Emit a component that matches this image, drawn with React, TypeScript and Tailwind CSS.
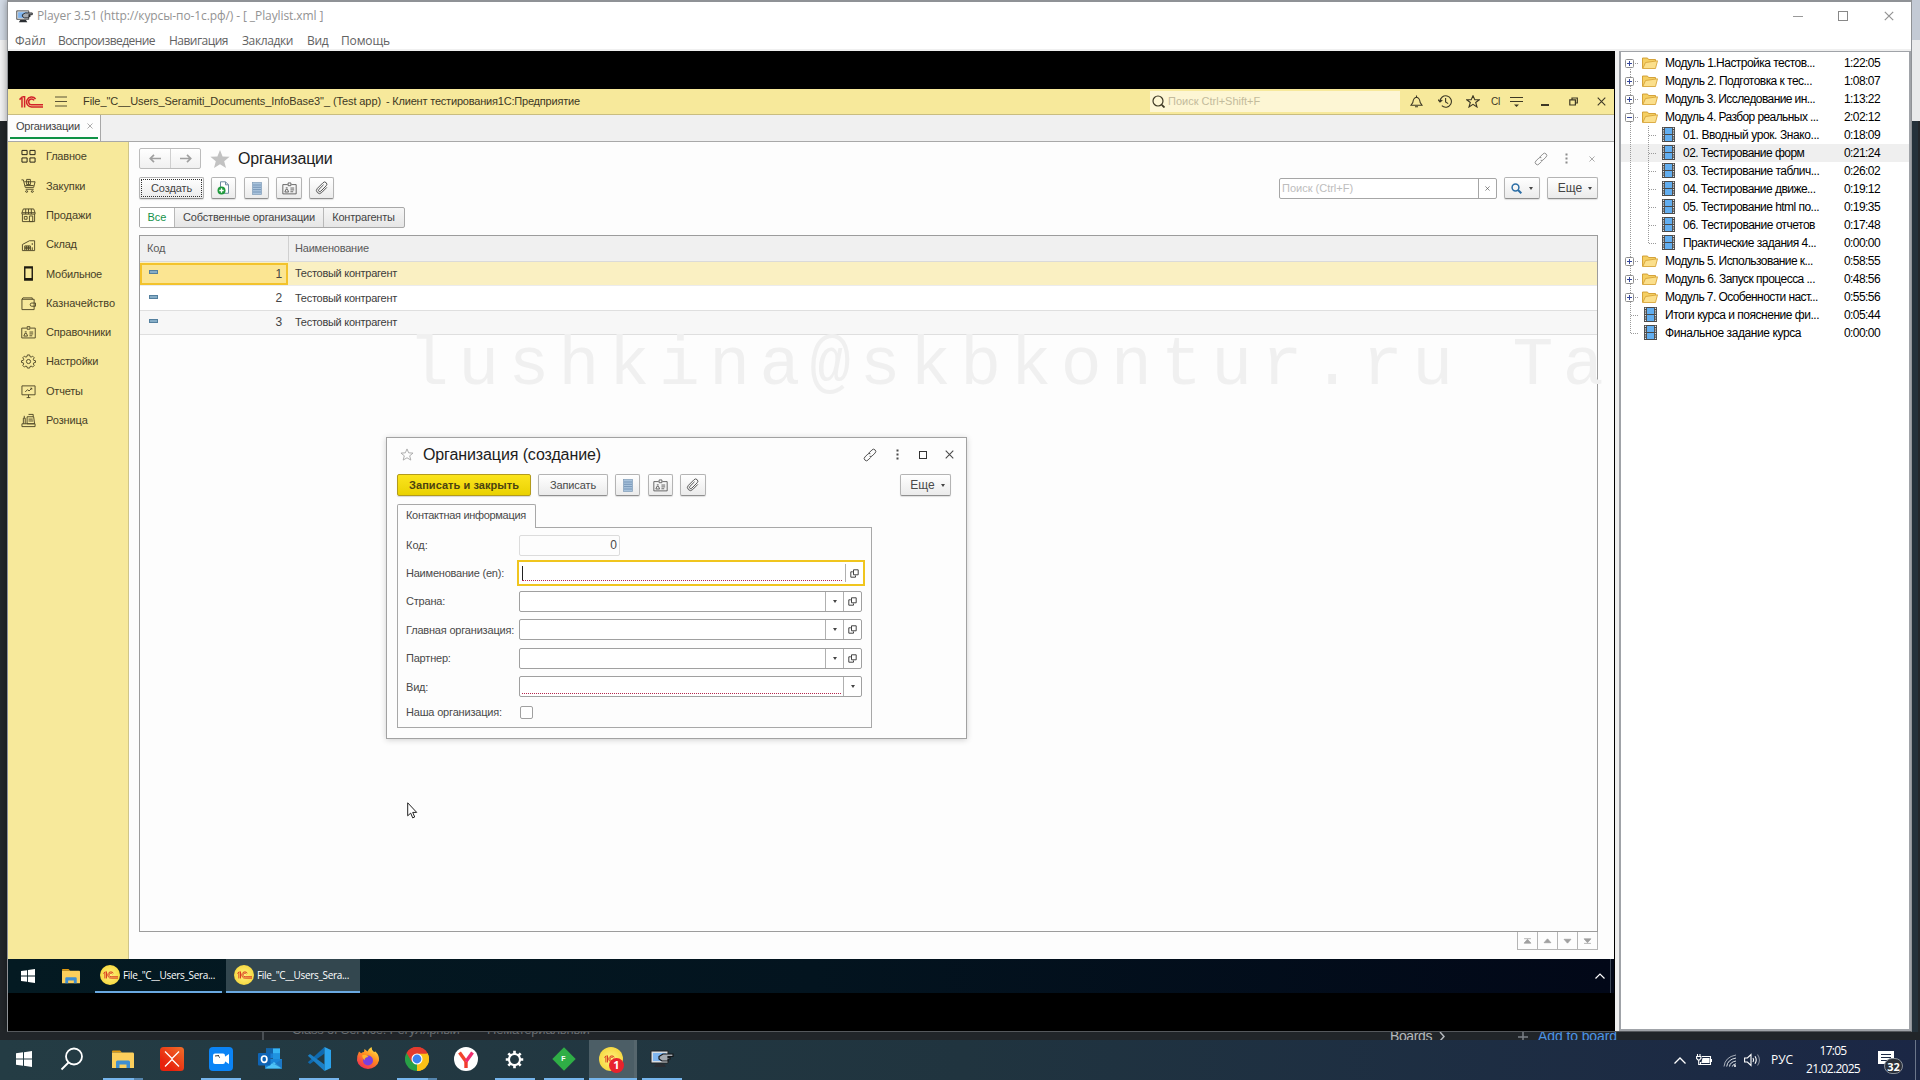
import type { ReactNode } from 'react'
import { clsx } from 'clsx'

/* ---------- shared glyphs ---------- */

function OneC({ className = '' }: { className?: string }) {
  return (
    <svg viewBox="0 0 24 12" className={className} fill="none" stroke="currentColor" strokeWidth="1.5">
      <path d="M0.5 3.6 L3 1.2 V11.5 M5.6 11.5 V0.8 H4" />
      <path d="M16.6 3 A5 5 0 1 0 13 11 H24" />
      <path d="M15 4.4 A2.9 2.9 0 1 0 13 8.8 H24" />
    </svg>
  )
}

function LinkIcon({ className = '' }: { className?: string }) {
  return (
    <svg viewBox="0 0 14 14" className={clsx('h-[14px] w-[14px]', className)} fill="none" stroke="currentColor" strokeWidth="0.9" strokeLinecap="round">
      <g transform="rotate(45 7 7)">
        <path d="M5 6.300H4.800V2a2.200 2.200 0 0 1 4.400 0v4.300a2 2 0 0 1-1.200 1.700" />
        <path d="M9.200 8.500V12a2.200 2.200 0 0 1-4.400 0V7.700A2 2 0 0 1 6 6" />
      </g>
    </svg>
  )
}

function ClipIcon() {
  return (
    <svg viewBox="0 0 14 14" className="h-[14px] w-[14px]" fill="none" stroke="#4f4f4f" strokeWidth="0.9" strokeLinecap="round">
      <path transform="rotate(45 7 7)" d="M10 3.500v7a3 3 0 0 1-6 0V2.500a2.200 2.200 0 0 1 4.400 0v7.700a1.300 1.300 0 0 1-2.600 0V4" />
    </svg>
  )
}

function CardIcon({ className = '' }: { className?: string }) {
  return (
    <svg viewBox="0 0 16 14" className={clsx('h-[13px] w-[15px]', className)} fill="none" stroke="currentColor" strokeWidth="0.9">
      <path d="M6 2.800H.8v10h14.400v-10H10M6.500 1h3v3h-3z" />
      <path d="M3 10.800 4.200 7.800h1.600L7 10.800zM4 6.300h2M9 6.500h4M9 8.500h4M9 10.500h3" />
    </svg>
  )
}

function ListIcon() {
  return (
    <svg viewBox="0 0 10 13" className="h-[13px] w-[10px]">
      <rect x="0.500" y="0.500" width="9" height="12" fill="#a9c3dc" stroke="#7f9cb8" strokeWidth="0.700" />
      <path d="M1 3h8M1 5.300h8M1 7.600h8M1 10h8" stroke="#6a8cae" strokeWidth="0.800" />
    </svg>
  )
}

function NewDocIcon() {
  return (
    <svg viewBox="0 0 13 14" className="h-[14px] w-[13px]">
      <path d="M3.500.800h5l3 3v8.500h-8z" fill="#fff" stroke="#6c8aa0" strokeWidth="1" />
      <path d="M8.500.800v3h3" fill="none" stroke="#6c8aa0" strokeWidth="1" />
      <circle cx="4.500" cy="9.500" r="4" fill="#1e9a3c" />
      <path d="M4.500 7.300v4.400M2.300 9.500h4.400" stroke="#fff" strokeWidth="1.300" />
    </svg>
  )
}

function CrossIcon({ className = '' }: { className?: string }) {
  return (
    <svg viewBox="0 0 10 10" className={className} fill="none" stroke="currentColor" strokeWidth="1.200">
      <path d="M.8.800l8.400 8.400M9.200.800.800 9.200" />
    </svg>
  )
}

function Dots({ className = '' }: { className?: string }) {
  return (
    <svg viewBox="0 0 3 11" className={clsx('h-[11px] w-[3px]', className)} fill="currentColor">
      <rect x=".5" y="0.500" width="2" height="2" />
      <rect x=".5" y="4.500" width="2" height="2" />
      <rect x=".5" y="8.500" width="2" height="2" />
    </svg>
  )
}

function Caret() {
  return <span className="h-0 w-0 border-x-[2.5px] border-t-[3px] border-x-transparent border-t-[#444]" />
}

function OpenIcon() {
  return (
    <svg viewBox="0 0 9 9" className="h-[9px] w-[9px]" fill="none" stroke="#444" strokeWidth="1">
      <path d="M3.500.800h4.700v5H3.500zM2.800 2.800H.800v5.400h4.700V6.500" />
    </svg>
  )
}

function MonitorHand({ className = '' }: { className?: string }) {
  return (
    <svg viewBox="0 0 24 18" className={className}>
      <path d="M1 1h17v12H1z" fill="#d8dde2" stroke="#222" strokeWidth="1" />
      <path d="M3 3h13v8H3z" fill="#7fb4ee" />
      <path d="M6 14h8l2 3H4z" fill="#2a2d32" />
      <path d="M9 6.500 13 4h10v2.500h-5v1h2v1.500h-2V11h-6L9 9z" fill="#a4a9af" stroke="#15181b" strokeWidth="1.200" />
    </svg>
  )
}

function Folder({ className = '' }: { className?: string }) {
  return (
    <svg viewBox="0 0 22 18" className={className}>
      <path d="M0 1.500Q0 .500 1 .500h7l2 2H0z" fill="#e09a10" />
      <path d="M0 2.500h21Q22 2.500 22 4v14H0z" fill="#fccf5c" />
      <path d="M4 18v-6q0-1.500 1.500-1.500h11Q18 10.500 18 12v6h-3.500v-3.500h-7V18z" fill="#3f8fd2" />
    </svg>
  )
}

function WinLogo({ className = '' }: { className?: string }) {
  return (
    <svg viewBox="0 0 16 16" className={className} fill="#fff">
      <path d="M0 2.300 7 1.300v6.200H0zM8 1.150 16 0v7.500H8zM0 8.500h7v6.200L0 13.700zM8 8.500h8V16L8 14.850z" />
    </svg>
  )
}

/* ---------- sidebar ---------- */

const side = 'h-[15px] w-[15px]'
const sections: { label: string; track: string; icon: ReactNode }[] = [
  {
    label: 'Главное', track: 'tracking-[-0.2px]',
    icon: <path d="M1 1.500h5.500v4.500H1zM9.500 1.500H15v4.500H9.500zM1 9.500h5.500V14H1zM9.500 9.500H15V14H9.500z" />,
  },
  {
    label: 'Закупки', track: 'tracking-[-0.1px]',
    icon: <path d="M.5 2h2l2 8h9l1.500-6H3.500M5 12h8.500M6 1.500h4V7H6zM8 3v4M4.500 8h9M6 13.500a1 1 0 1 0 .1 0M12 13.500a1 1 0 1 0 .1 0" />,
  },
  {
    label: 'Продажи', track: 'tracking-[-0.1px]',
    icon: <path d="M2.500 1h11l1.500 4v1.500H1V5zM1.500 6.500v8h13v-8M1 5h14M5 1v5.500M8 1v5.500M11 1v5.500M3.500 9h3v3h-3zM9 8.500h3.500v6H9z" />,
  },
  {
    label: 'Склад', track: 'tracking-[-0.2px]',
    icon: <path d="M1.500 14.500V8L9 4h5.500v10.500zM4 14V9.500h6V14M4 11h6M4 12.500h6M6 9.500V14M8 9.500V14M12 6.500v2M12 11v3" />,
  },
  {
    label: 'Мобильное', track: 'tracking-[-0.26px]',
    icon: <path d="M4 1h8v14H4zM4 2h8M4 13.500h8" strokeWidth="1.500" />,
  },
  {
    label: 'Казначейство', track: 'tracking-[-0.06px]',
    icon: <path d="M1 3.500h13v11H1zM1 3.500l1-1.500h10v1.500M15.500 7.500h-4a1.700 1.700 0 0 0 0 3.400h4z" />,
  },
  {
    label: 'Справочники', track: 'tracking-[-0.15px]',
    icon: <path d="M6 3.300H.8v10.500h14.400V3.300H10M6.500 1.800h3V4.500h-3zM3 11.800l1.200-3h1.600L7 11.800zM4 7.300h2M9 7.500h4M9 9.500h4M9 11.500h3" />,
  },
  {
    label: 'Настройки', track: 'tracking-[-0.2px]',
    icon: (
      <>
        <path d="M6.800 1h2.400l.4 1.800 1.200.5 1.600-1 1.700 1.700-1 1.600.5 1.200 1.900.400v1.800l-1.900.400-.5 1.200 1 1.600-1.700 1.700-1.600-1-1.200.5L9.200 15H6.800l-.4-1.600-1.200-.5-1.600 1-1.700-1.700 1-1.600-.5-1.200L.5 9V7.200l1.900-.400.5-1.200-1-1.600L3.600 2.300l1.600 1 1.200-.5z" />
        <circle cx="8" cy="8" r="2.200" />
      </>
    ),
  },
  {
    label: 'Отчеты', track: 'tracking-[-0.2px]',
    icon: <path d="M1 2h14v9.500H1zM6 14.500h4M8 11.500v3M4.500 8.500 7 6l1.500 1.500 3-3M10 4.500h1.500V6" />,
  },
  {
    label: 'Розница', track: 'tracking-[-0.1px]',
    icon: <path d="M1 14.500h14v-3H1zM2.500 11.500v-6h2v6M6.500 4h7l1 7.500h-8zM8 1.500h5V4M8 6.500h4.500M8 8.500h5M3.500 3v2.500" />,
  },
]

function Sidebar() {
  return (
    <nav className="flex w-[121px] shrink-0 flex-col border-r border-[#cfc58a] bg-[#f7e99b] text-[11px] text-[#473f28]">
      {sections.map((s) => (
        <div key={s.label} className="flex h-[29.3px] items-center pl-[12.5px]">
          <svg
            viewBox="0 0 16 16" fill="none" strokeWidth="1"
            className={clsx(side, s.label === 'Мобильное' || s.label === 'Главное' ? 'stroke-[#1d1a10]' : 'stroke-[#4f4728]')}
          >
            {s.icon}
          </svg>
          <span className={clsx('ml-[10.5px]', s.track)}>{s.label}</span>
        </div>
      ))}
    </nav>
  )
}

/* ---------- 1C client ---------- */

const btn = 'flex items-center justify-center rounded-[2px] border border-[#b4b4b4] border-b-[#8f8f8f] bg-linear-to-b from-white to-[#ebebeb] shadow-[0_1px_1px_rgba(0,0,0,0.12)]'

function AppHeader() {
  return (
    <header className="flex h-[26px] shrink-0 items-center border-b border-[#c9bd80] bg-[#f7e99b] text-[11px] text-[#3d3824]">
      <OneC className="ml-[11px] h-[12px] w-[24px] text-[#d2232a]" />
      <svg viewBox="0 0 12 11" className="ml-[12px] h-[11px] w-[12px]" stroke="#5b5436" strokeWidth="1.200">
        <path d="M0 1h12M0 5.500h12M0 10h12" />
      </svg>
      <span className="ml-[16px] w-[303px] whitespace-pre tracking-[-0.08px]">File_"C__Users_Seramiti_Documents_InfoBase3"_ (Test app)</span>
      <span className="whitespace-pre tracking-[-0.2px]">- Клиент тестирования1С:Предприятие</span>
      <div className="ml-auto flex h-[21px] w-[250px] items-center bg-[#fdf6d4] pl-[2px]">
        <svg viewBox="0 0 13 13" className="h-[13px] w-[13px]" fill="none" stroke="#3d3824" strokeWidth="1.200">
          <circle cx="6" cy="6" r="5" />
          <path d="m9.800 9.800 2.700 2.700" strokeWidth="1.800" />
        </svg>
        <span className="ml-[3px] text-[#c3bb9c]">Поиск Ctrl+Shift+F</span>
      </div>
      <div className="flex w-[214px] shrink-0 items-center text-[#3d3824]">
        <svg viewBox="0 0 13 13" className="ml-[10px] h-[13px] w-[13px]" fill="none" stroke="currentColor" strokeWidth="1.100">
          <path d="M1 10.200h11L10.200 7.500C9.800 4.500 9 2.500 6.500 2.200 4 2.500 3.200 4.500 2.800 7.500zM6.500.500v1.700M5 11.800h3" />
        </svg>
        <svg viewBox="0 0 14 13" className="ml-[15px] h-[13px] w-[14px]" fill="none" stroke="currentColor" strokeWidth="1.100">
          <path d="M2 6.500a5.700 5.700 0 1 1 1.800 4.200M0 4.500l2 2.500 2.300-2M7.600 3v4l2.600 1.600" />
        </svg>
        <svg viewBox="0 0 14 13" className="ml-[14px] h-[13px] w-[14px]" fill="none" stroke="currentColor" strokeWidth="1.100">
          <path d="m7 .8 1.800 4h4.400L9.700 7.500l1.300 4.500L7 9.400 3 12l1.300-4.500L.8 4.800h4.400z" />
        </svg>
        <span className="ml-[11px] text-[10px] tracking-[-0.4px]">CI</span>
        <svg viewBox="0 0 13 12" className="ml-[10px] h-[12px] w-[13px]" fill="none" stroke="currentColor" strokeWidth="1.100">
          <path d="M0 1.500h13M0 5.500h13" />
          <path d="M4 8.500h5L6.500 11z" fill="currentColor" stroke="none" />
        </svg>
        <span className="mt-[7px] ml-[18px] h-[1.5px] w-[8px] bg-[#3d3824]" />
        <svg viewBox="0 0 9 9" className="ml-[20px] h-[9px] w-[9px]" fill="none" stroke="currentColor" strokeWidth="1.200">
          <path d="M3 2.600V1h5.300v5H6.500M.8 2.800h5.600V8H.8z" />
        </svg>
        <CrossIcon className="ml-[19px] h-[9px] w-[9px]" />
      </div>
    </header>
  )
}

function Arrow({ flip }: { flip?: boolean }) {
  return (
    <svg viewBox="0 0 12 9" className={clsx('h-[9px] w-[12px]', flip && 'rotate-180')} fill="none" stroke="#a0a0a0" strokeWidth="1.700">
      <path d="M1 4.500h11M5 .8 1.300 4.500 5 8.200" />
    </svg>
  )
}

const rows = [
  { id: 1, name: 'Тестовый контрагент' },
  { id: 2, name: 'Тестовый контрагент' },
  { id: 3, name: 'Тестовый контрагент' },
]

function DataTable() {
  return (
    <div className="mt-[7px] flex h-[697px] shrink-0 flex-col border border-[#9c9c9c] bg-[#fdfdfd] tracking-[-0.2px]">
      <div className="flex h-[26px] shrink-0 items-center border-b border-[#dadada] bg-[#f0f0f0] text-[#5a5a5a]">
        <span className="flex h-full w-[149px] items-center border-r border-[#d0d0d0] pl-[7px]">Код</span>
        <span className="pl-[6px]">Наименование</span>
      </div>
      {rows.map((r) => (
        <div
          key={r.id}
          className={clsx(
            'flex h-[24.4px] shrink-0 items-center border-b',
            r.id === 1 && 'border-[#ececec] bg-[#faf0c2]',
            r.id === 2 && 'border-[#dfdfdf] bg-white',
            r.id === 3 && 'border-[#dfdfdf] bg-[#f7f7f7]',
          )}
        >
          <span
            className={clsx(
              'flex w-[148px] items-center justify-between border-2 pr-[4px] pl-[7px]',
              r.id === 1 ? 'h-[22px] border-[#f3c32c] bg-[#fbe592]' : 'h-full border-transparent',
            )}
          >
            <span className="mt-[-3px] h-[4px] w-[9px] border border-[#54809f] bg-[#86adc6]" />
            <span className="text-[12px] text-[#454545]">{r.id}</span>
          </span>
          <span className="pl-[7px] tracking-[-0.27px] text-[#3c3c3c]">{r.name}</span>
        </div>
      ))}
      <div className="relative h-[80px]">
        <span className="absolute top-[-9px] left-[268px] w-[1206px] overflow-hidden font-['Liberation_Mono'] text-[68px] leading-[80px] tracking-[9.4px] whitespace-pre text-[#f0f0f0]">
          lushkina@skbkontur.ru Ta
        </span>
      </div>
    </div>
  )
}

function ScrollButtons() {
  const shapes = ['M1 .8h8M5 1.500 9 6H1z', 'M5 1 9 5.500H1z', 'M1 1.500h8L5 6z', 'M1 1h8L5 5.500zM1 6.300h8']
  return (
    <div className="flex h-[18px] self-end border-r border-b border-[#b5b5b5]">
      {shapes.map((d) => (
        <span key={d} className="flex w-[20px] items-center justify-center border-l border-[#b5b5b5]">
          <svg viewBox="0 0 10 7" className="h-[6px] w-[9px]" fill="#a0a0a0" stroke="#a0a0a0" strokeWidth="0.900">
            <path d={d} />
          </svg>
        </span>
      ))}
    </div>
  )
}

function ListForm() {
  return (
    <section className="flex min-w-0 flex-1 flex-col bg-[#fdfdfd] pr-[16px] pl-[10px] text-[11px] text-[#444]">
      <div className="mt-[6px] flex h-[21px] items-center">
        <div className="flex h-[21px] w-[62px] rounded-[2px] border border-[#bcbcbc] bg-linear-to-b from-white to-[#f0f0f0]">
          <span className="flex w-[31px] items-center justify-center border-r border-[#cfcfcf]"><Arrow /></span>
          <span className="flex flex-1 items-center justify-center"><Arrow flip /></span>
        </div>
        <svg viewBox="0 0 20 18" className="ml-[9px] h-[18px] w-[20px]" fill="#c2c2c2">
          <path d="m10 0 2.600 6.400 7 .4-5.400 4.400 1.800 6.800L10 14.200 4 18l1.800-6.800L.4 6.800l7-.4z" />
        </svg>
        <h1 className="ml-[8px] text-[16px] tracking-[-0.2px] text-[#1c1c1c]">Организации</h1>
        <LinkIcon className="ml-auto text-[#8a8a8a]" />
        <Dots className="ml-[17px] text-[#8c8c8c]" />
        <CrossIcon className="mr-[3px] ml-[21px] h-[6px] w-[6px] text-[#8c8c8c]" />
      </div>
      <div className="mt-[8px] flex h-[22px]">
        <div className={clsx(btn, 'w-[65px] p-[1px]')}>
          <span className="flex h-full w-full items-center justify-center border border-dotted border-[#333] tracking-[-0.1px]">Создать</span>
        </div>
        <div className={clsx(btn, 'ml-[7px] w-[25px]')}><NewDocIcon /></div>
        <div className={clsx(btn, 'ml-[8px] w-[25px]')}><ListIcon /></div>
        <div className={clsx(btn, 'ml-[7px] w-[26px] text-[#4f4f4f]')}><CardIcon /></div>
        <div className={clsx(btn, 'ml-[7px] w-[25px]')}><ClipIcon /></div>
        <div className="my-[0.5px] ml-auto flex w-[218px] rounded-[2px] border border-[#a6a6a6] bg-white">
          <span className="flex flex-1 items-center pl-[2px] text-[#bdbdbd]">Поиск (Ctrl+F)</span>
          <span className="flex w-[18px] items-center justify-center border-l border-[#a6a6a6]"><CrossIcon className="h-[5px] w-[5px] text-[#444]" /></span>
        </div>
        <div className={clsx(btn, 'ml-[7px] w-[36px] gap-[7px]')}>
          <svg viewBox="0 0 11 11" className="h-[11px] w-[11px]" fill="none" stroke="#2c6ea6">
            <circle cx="4.500" cy="4.500" r="3.400" strokeWidth="1.500" />
            <path d="m7 7 3.300 3.300" strokeWidth="2" />
          </svg>
          <Caret />
        </div>
        <div className={clsx(btn, 'ml-[7px] w-[51px] gap-[6px] pl-[5px] text-[12px]')}>Еще<Caret /></div>
      </div>
      <div className="mt-[8px] flex h-[21px] shrink-0 self-start rounded-[2px] border border-[#a8a8a8] bg-linear-to-b from-[#f6f6f6] to-[#e6e6e6] leading-[19px]">
        <span className="w-[34px] bg-white text-center text-[#15924a]">Все</span>
        <span className="w-[149px] border-l border-[#b8b8b8] text-center tracking-[-0.17px]">Собственные организации</span>
        <span className="w-[81px] border-l border-[#b8b8b8] pr-[1px] text-center tracking-[-0.2px]">Контрагенты</span>
      </div>
      <DataTable />
      <ScrollButtons />
    </section>
  )
}

/* ---------- dialog ---------- */

function Field({ label, track, buttons, required }: {
  label: string; track: string; buttons: ('list' | 'open')[]; required?: boolean
}) {
  return (
    <div className="flex h-[28.5px] items-center">
      <span className={clsx('w-[113px] shrink-0 whitespace-nowrap', track)}>{label}</span>
      <div className="flex h-[21px] w-[343px] rounded-[2px] border border-[#a0a0a0] bg-white">
        <span className="flex flex-1 items-end px-[2px] pb-[2px]">
          {required && <span className="w-full border-b border-dotted border-[#b5274d]" />}
        </span>
        {buttons.map((b) => (
          <span key={b} className="flex w-[18px] items-center justify-center border-l border-[#b0b0b0]">
            {b === 'list' ? <Caret /> : <OpenIcon />}
          </span>
        ))}
      </div>
    </div>
  )
}

function CreateDialog() {
  return (
    <div className="absolute top-[437px] left-[386px] flex h-[302px] w-[581px] flex-col border border-[#a2a2a2] bg-[#fdfdfd] px-[10px] font-['Liberation_Sans'] text-[11px] text-[#4a4a4a] shadow-[0_1px_6px_rgba(0,0,0,0.18)]">
      <div className="mt-[6px] flex h-[21px] items-center text-[#4a4a4a]">
        <svg viewBox="0 0 15 14" className="ml-[3px] h-[13px] w-[14px]" fill="none" stroke="#a8a8a8" strokeWidth="1">
          <path d="m7.500 1 1.800 4.200 4.700.3-3.600 2.900 1.200 4.600-4.100-2.500L3.400 13l1.200-4.600L1 5.500l4.700-.3z" />
        </svg>
        <h2 className="ml-[9px] text-[16px] tracking-[-0.11px] text-[#1c1c1c]">Организация (создание)</h2>
        <LinkIcon className="ml-auto" />
        <Dots className="ml-[19px]" />
        <span className="ml-[20px] h-[8px] w-[8px] border border-[#333]" />
        <CrossIcon className="mr-[2px] ml-[18px] h-[9px] w-[9px]" />
      </div>
      <div className="mt-[9px] flex h-[22px] shrink-0">
        <div className="flex w-[134px] items-center justify-center rounded-[2px] border border-[#b39b1c] bg-linear-to-b from-[#fbe41c] to-[#ead200] font-bold tracking-[0.05px] text-[#4c4310] shadow-[0_1px_1px_rgba(0,0,0,0.15)]">
          Записать и закрыть
        </div>
        <div className={clsx(btn, 'ml-[7px] w-[70px] tracking-[-0.13px]')}>Записать</div>
        <div className={clsx(btn, 'ml-[7px] w-[25px]')}><ListIcon /></div>
        <div className={clsx(btn, 'ml-[8px] w-[25px] text-[#4f4f4f]')}><CardIcon /></div>
        <div className={clsx(btn, 'ml-[7px] w-[26px]')}><ClipIcon /></div>
        <div className={clsx(btn, 'mr-[5px] ml-auto w-[51px] gap-[6px] pl-[4px] text-[12px]')}>Еще<Caret /></div>
      </div>
      <div className="z-10 mt-[8px] flex h-[24px] w-[139px] shrink-0 items-center rounded-t-[2px] border border-b-0 border-[#a8a8a8] bg-[#fdfdfd] pb-[2px] pl-[8px] tracking-[-0.31px] whitespace-nowrap">
        Контактная информация
      </div>
      <div className="mt-[-1px] flex h-[201px] w-[475px] shrink-0 flex-col border border-[#a8a8a8] pt-[3px] pl-[8px]">
        <div className="flex h-[28px] items-center">
          <span className="w-[113px]">Код:</span>
          <span className="flex h-[21px] w-[101px] items-center justify-end rounded-[2px] border border-[#dcdcdc] pr-[2px] text-[12px]">0</span>
        </div>
        <div className="flex h-[28px] items-center">
          <span className="w-[111px] shrink-0 tracking-[-0.22px] whitespace-nowrap">Наименование (en):</span>
          <div className="flex h-[26px] w-[348px] border-2 border-[#f0c51e] bg-white py-[2px]">
            <span className="flex flex-1 flex-col px-[3px]">
              <span className="mt-[2px] h-[14px] w-px bg-[#222]" />
              <span className="border-b border-dotted border-[#b5274d]" />
            </span>
            <span className="flex w-[18px] items-center justify-center border-l border-[#b0b0b0]"><OpenIcon /></span>
          </div>
        </div>
        <Field label="Страна:" track="tracking-[-0.2px]" buttons={['list', 'open']} />
        <Field label="Главная организация:" track="tracking-[-0.19px]" buttons={['list', 'open']} />
        <Field label="Партнер:" track="tracking-[-0.2px]" buttons={['list', 'open']} />
        <Field label="Вид:" track="tracking-[-0.2px]" buttons={['list']} required />
        <div className="flex h-[23px] items-center">
          <span className="w-[114px] tracking-[-0.18px]">Наша организация:</span>
          <span className="h-[13px] w-[13px] rounded-[2px] border border-[#a0a0a0] bg-white" />
        </div>
      </div>
    </div>
  )
}

/* ---------- recorded desktop taskbar ---------- */

function CoinIcon({ className = '' }: { className?: string }) {
  return (
    <span className={clsx('flex items-center justify-center rounded-full bg-radial from-[#fff27a] to-[#f3cf1a] text-[#d8321e]', className)}>
      <OneC className="h-[8px] w-[15px]" />
    </span>
  )
}

function VideoTaskbar() {
  return (
    <div className="flex h-[34px] shrink-0 items-center bg-linear-to-r from-[#041a22] via-[#03141f] to-[#020818] font-['Open_Sans'] text-[10px] text-white">
      <WinLogo className="ml-[13px] h-[14px] w-[14px]" />
      <Folder className="ml-[27px] h-[16px] w-[18px]" />
      <div className="ml-[15px] flex h-full w-[127px] items-center border-b-2 border-[#6aa9e2] pl-[5px]">
        <CoinIcon className="h-[20px] w-[20px]" />
        <span className="ml-[3px] tracking-[-0.31px]">File_"C__Users_Sera...</span>
      </div>
      <div className="ml-[4px] flex h-full w-[134px] items-center border-b-2 border-[#6aa9e2] bg-[#33474f] pl-[8px]">
        <CoinIcon className="h-[20px] w-[20px]" />
        <span className="ml-[3px] tracking-[-0.31px]">File_"C__Users_Sera...</span>
      </div>
      <svg viewBox="0 0 10 6" className="mr-[5px] ml-auto h-[6px] w-[10px]" fill="none" stroke="#fff" strokeWidth="1.200">
        <path d="M.5 5.500 5 1l4.500 4.500" />
      </svg>
      <span className="mr-[3px] h-full w-px bg-[#3c4656]" />
    </div>
  )
}

function VideoArea() {
  return (
    <div className="flex w-[1607px] shrink-0 flex-col border-r border-black bg-black pt-[38px] font-['Liberation_Sans']">
      <AppHeader />
      <div className="flex h-[27px] shrink-0 border-b border-[#a8a8a8] bg-[#f0f0f0]">
        <div className="flex w-[93px] flex-col border-r border-[#a8a8a8] bg-[#fdfdfd] px-[2px] pb-[2px]">
          <div className="flex flex-1 items-center pl-[6px] text-[11px] text-[#444]">
            <span className="tracking-[-0.25px]">Организации</span>
            <CrossIcon className="ml-[7px] h-[6px] w-[6px] text-[#8c8c8c]" />
          </div>
          <span className="h-[2px] bg-[#0f9246]" />
        </div>
      </div>
      <div className="flex h-[817px] shrink-0">
        <Sidebar />
        <ListForm />
      </div>
      <VideoTaskbar />
    </div>
  )
}

/* ---------- playlist tree ---------- */

type Node = { kind: 'closed' | 'open' | 'film' | 'leaf'; label: string; time: string; track: string; active?: boolean }
const playlist: Node[] = [
  { kind: 'closed', label: 'Модуль 1.Настройка тестов...', time: '1:22:05', track: 'tracking-[-0.53px]' },
  { kind: 'closed', label: 'Модуль 2. Подготовка к тес...', time: '1:08:07', track: 'tracking-[-0.53px]' },
  { kind: 'closed', label: 'Модуль 3. Исследование ин...', time: '1:13:22', track: 'tracking-[-0.59px]' },
  { kind: 'open', label: 'Модуль 4. Разбор реальных ...', time: '2:02:12', track: 'tracking-[-0.58px]' },
  { kind: 'film', label: '01. Вводный урок. Знако...', time: '0:18:09', track: 'tracking-[-0.40px]' },
  { kind: 'film', label: '02. Тестирование форм', time: '0:21:24', track: 'tracking-[-0.54px]', active: true },
  { kind: 'film', label: '03. Тестирование таблич...', time: '0:26:02', track: 'tracking-[-0.51px]' },
  { kind: 'film', label: '04. Тестирование движе...', time: '0:19:12', track: 'tracking-[-0.54px]' },
  { kind: 'film', label: '05. Тестирование html по...', time: '0:19:35', track: 'tracking-[-0.53px]' },
  { kind: 'film', label: '06. Тестирование отчетов', time: '0:17:48', track: 'tracking-[-0.50px]' },
  { kind: 'film', label: 'Практические задания 4...', time: '0:00:00', track: 'tracking-[-0.52px]' },
  { kind: 'closed', label: 'Модуль 5. Использование к...', time: '0:58:55', track: 'tracking-[-0.56px]' },
  { kind: 'closed', label: 'Модуль 6. Запуск процесса ...', time: '0:48:56', track: 'tracking-[-0.53px]' },
  { kind: 'closed', label: 'Модуль 7. Особенности наст...', time: '0:55:56', track: 'tracking-[-0.58px]' },
  { kind: 'leaf', label: 'Итоги курса и пояснение фи...', time: '0:05:44', track: 'tracking-[-0.48px]' },
  { kind: 'leaf', label: 'Финальное задание курса', time: '0:00:00', track: 'tracking-[-0.41px]' },
]

function FilmIcon() {
  return (
    <svg viewBox="0 0 13 15" className="h-[15px] w-[13px] shrink-0">
      <path d="M0 0h13v15H0z" fill="#4a4a4a" />
      <path d="M3 1h7v6H3zM3 8h7v6H3z" fill="#62aef0" />
      <path d="M1.500.800v14M11.500.800v14" stroke="#e4e4e4" strokeWidth="1.200" strokeDasharray="1.200 1.200" />
    </svg>
  )
}

function TreeFolder() {
  return (
    <svg viewBox="0 0 16 12" className="h-[12px] w-[16px] shrink-0">
      <path d="M.5 11.500V1h5l1 1.500h7V5" fill="#f5cf62" stroke="#cf9a2c" strokeWidth="0.900" />
      <path d="M.8 11.500 3.500 5.500 15.500 3.800 13.500 11.500z" fill="#fbdf8b" stroke="#d8a53a" strokeWidth="0.900" />
    </svg>
  )
}

function TreeRow({ node, last }: { node: Node; last: boolean }) {
  const isModule = node.kind === 'closed' || node.kind === 'open'
  const lastFilm = node.label.startsWith('Практические')
  return (
    <div className={clsx('flex h-[18px] shrink-0 items-center', node.active && 'bg-[#efefef]')}>
      <svg viewBox="0 0 40 18" className={clsx('h-[18px] shrink-0', node.kind === 'film' ? 'w-[40px]' : 'w-[20px]')} preserveAspectRatio="xMinYMin slice" fill="none">
        <g stroke="#9a9a9a" strokeDasharray="1 1">
          <path d={last ? 'M9.500 0v9' : node.time === '1:22:05' ? 'M9.500 9v9' : 'M9.500 0v18'} />
          {node.kind !== 'film' && <path d="M10 9.500h8" />}
          {node.kind === 'film' && <path d={lastFilm ? 'M27.500 0v9M28 9.500h8' : 'M27.500 0v18M28 9.500h8'} />}
        </g>
        {isModule && (
          <>
            <rect x="4.500" y="5.500" width="8" height="8" rx="1" fill="#fff" stroke="#8e8e8e" />
            <path d={node.kind === 'closed' ? 'M6 9.500h5M8.500 7v5' : 'M6 9.500h5'} stroke="#35479c" />
          </>
        )}
      </svg>
      <span className={clsx('flex items-center', node.kind === 'film' ? 'w-[22px] pb-[1px] pl-[1px]' : node.kind === 'leaf' ? 'w-[24px] pb-[1px] pl-[3px]' : 'w-[24px] pb-[1px] pl-[1px]')}>
        {isModule ? <TreeFolder /> : <FilmIcon />}
      </span>
      <span className={clsx('whitespace-nowrap', node.track)}>{node.label}</span>
      <span className="mr-[28px] ml-auto w-[37px] tracking-[-0.58px]">{node.time}</span>
    </div>
  )
}

function Playlist() {
  return (
    <div className="ml-[4px] flex flex-1 flex-col border-2 border-t border-[#a0a3a8] bg-white pt-[2px] font-['Liberation_Sans'] text-[12px] text-black">
      {playlist.map((n, i) => (
        <TreeRow key={n.label} node={n} last={i === playlist.length - 1} />
      ))}
    </div>
  )
}

/* ---------- player window ---------- */

function PlayerWindow() {
  return (
    <div className="flex w-[1905px] shrink-0 flex-col border border-t-2 border-[#8f9296] border-b-[#55585c] bg-white font-['Open_Sans'] text-[12px] shadow-[0_0_8px_rgba(0,0,0,0.4)]">
      <div className="flex h-[29px] shrink-0 items-center pb-[1px] text-[#939393]">
        <MonitorHand className="ml-[8px] h-[13px] w-[17px]" />
        <span className="ml-[4px] tracking-[-0.1px]">Player 3.51 (http://курсы-по-1с.рф/) - [ _Playlist.xml ]</span>
        <span className="mr-[35px] ml-auto h-px w-[10px] bg-[#999]" />
        <span className="mr-[36px] h-[10px] w-[10px] border border-[#888]" />
        <CrossIcon className="mr-[17px] h-[10px] w-[10px]" />
      </div>
      <div className="flex h-[20px] shrink-0 items-center border-b-2 border-[#f0f0f0] pt-[1px] text-[#626262]">
        <span className="ml-[7px] w-[43px]">Файл</span>
        <span className="w-[111px] tracking-[-0.56px]">Воспроизведение</span>
        <span className="w-[73px] tracking-[-0.52px]">Навигация</span>
        <span className="w-[65px] tracking-[-0.39px]">Закладки</span>
        <span className="w-[34px] tracking-[-0.3px]">Вид</span>
        <span className="tracking-[-0.14px]">Помощь</span>
      </div>
      <div className="flex min-h-0 flex-1 bg-[#f0f0f0]">
        <VideoArea />
        <Playlist />
      </div>
    </div>
  )
}

function BackgroundStrip() {
  return (
    <div className="flex h-[8px] shrink-0 overflow-hidden bg-[#212529] font-['Liberation_Sans'] text-[14px] leading-[16px]">
      <span className="ml-[262px] w-[2px] bg-[#4a4f54]" />
      <span className="mt-[-10px] ml-[28px] w-[195px] text-[13px] tracking-[-0.2px] whitespace-pre text-[#686c70]">Class of Service: Регулярный</span>
      <span className="mt-[-10px] text-[13px] tracking-[-0.2px] whitespace-pre text-[#686c70]">Нематериальный</span>
      <span className="mt-[-4px] ml-auto tracking-[-0.39px] text-[#b4b8bc]">Boards</span>
      <svg viewBox="0 0 6 10" className="ml-[7px] h-[10px] w-[6px]" fill="none" stroke="#b4b8bc" strokeWidth="1.500"><path d="m1 0 4 4.500L1 9" /></svg>
      <svg viewBox="0 0 10 10" className="ml-[73px] h-[10px] w-[10px]" stroke="#7b8086" strokeWidth="1.500"><path d="M0 5h10M5 0v10" /></svg>
      <span className="mt-[-4px] mr-[303px] ml-[10px] tracking-[-0.1px] text-[#4a94e6]">Add to board</span>
    </div>
  )
}

/* ---------- system taskbar ---------- */

const big = 'h-[24px] w-[24px]'
const apps: { name: string; icon: ReactNode; line?: 'full' | 'split' | 'active' }[] = [
  { name: 'start', icon: <WinLogo className="mr-[1px] h-[16px] w-[16px]" /> },
  {
    name: 'search',
    icon: (
      <svg viewBox="0 0 24 24" className="mr-[3px] h-[24px] w-[24px]" fill="none" stroke="#fff" strokeWidth="1.800">
        <circle cx="14" cy="9.500" r="8" />
        <path d="M8.500 15.500 1.500 22.500" />
      </svg>
    ),
  },
  { name: 'explorer', line: 'split', icon: <Folder className="h-[18px] w-[22px]" /> },
  {
    name: 'xmind',
    icon: (
      <svg viewBox="0 0 24 24" className={big}>
        <defs><linearGradient id="xg" x1="1" y1="0" x2="0.300" y2="0.800"><stop stopColor="#f0702a" /><stop offset="1" stopColor="#e8210c" /></linearGradient></defs>
        <rect width="24" height="24" rx="3.500" fill="url(#xg)" />
        <path d="M5 4.500 12 11.500l7-7M5 19.500 12 12.500l7 7" stroke="#fff" strokeWidth="1.300" fill="none" />
      </svg>
    ),
  },
  {
    name: 'meet', line: 'full',
    icon: (
      <svg viewBox="0 0 24 24" className={big}>
        <rect width="24" height="24" rx="4" fill="#0b84f6" />
        <rect x="4" y="6.500" width="12" height="10.500" rx="2" fill="#fff" />
        <path d="m15.500 10 4.500-3v10l-4.500-3z" fill="#fff" />
        <path d="m6 9 4-.5M9.500 9.500l1.500 1" stroke="#222" strokeWidth="0.900" />
      </svg>
    ),
  },
  {
    name: 'outlook',
    icon: (
      <svg viewBox="0 0 24 24" className={big}>
        <path d="M8 1.500h14v10H8z" fill="#1a7fd4" />
        <path d="M8 1.500h7v5H8z" fill="#1265ad" /><path d="M15 1.500h7v5h-7z" fill="#36b5f4" /><path d="M15 6.500h7V12h-7z" fill="#1f93e0" />
        <path d="M7 12h17v9.500H7z" fill="#1a86d8" /><path d="m7 21.500 9-6.500 8 6.500z" fill="#4cc3f7" /><path d="m7 12 9 5.500 8-5.500v9.500z" fill="#1e6fbb" opacity=".6" />
        <rect y="6" width="12.500" height="12.500" rx="1" fill="#0e64b5" />
        <ellipse cx="6.200" cy="12.200" rx="2.700" ry="3.200" fill="none" stroke="#fff" strokeWidth="1.700" />
      </svg>
    ),
  },
  {
    name: 'vscode', line: 'full',
    icon: (
      <svg viewBox="0 0 24 24" className={big}>
        <path d="M.8 15.200 17.500 0v6.500L3 17z" fill="#0f6ab0" />
        <path d="M.8 8.800 3 7l14.500 10.500V24z" fill="#1b7fc6" />
        <path d="M17.500 0 24 3v18l-6.500 3z" fill="#2ba3ec" />
      </svg>
    ),
  },
  {
    name: 'firefox',
    icon: (
      <svg viewBox="0 0 24 24" className={big}>
        <defs>
          <linearGradient id="ff" x1="0.800" y1="0" x2="0.200" y2="1"><stop stopColor="#ffe84a" /><stop offset="0.450" stopColor="#ff8a1f" /><stop offset="1" stopColor="#f2255b" /></linearGradient>
        </defs>
        <path d="M3 4.500 5.200 6.200Q6.500 5 8 5l.5-3 3 2.500Q12.500 1.500 15.500 0q0 3 2.500 5l1.500-.5q4 4 3.500 9A11.200 10.500 0 0 1 1 13.500Q.800 8.500 3 4.500z" fill="url(#ff)" />
        <circle cx="12" cy="13.500" r="5" fill="#7a3fe0" />
        <path d="M6 8.500q4-2 6.500 1.500-4 .3-4 3.500Q6.500 11.500 6 8.500z" fill="#ffb52b" />
      </svg>
    ),
  },
  {
    name: 'chrome', line: 'split',
    icon: (
      <svg viewBox="0 0 24 24" className={big}>
        <path d="M12 12 1.600 6A12 12 0 0 1 22.400 6z" fill="#e33b2e" />
        <path d="M12 12 22.400 6A12 12 0 0 1 12 24z" fill="#fbc116" />
        <path d="M12 12v12A12 12 0 0 1 1.600 6z" fill="#28a046" />
        <path d="M12 6.500h10.600A12 12 0 0 1 12 24l4.800-9.300z" fill="#fbc116" />
        <path d="M1.600 6A12 12 0 0 1 22.600 6.500H12l-5.200 8.500z" fill="#e33b2e" />
        <circle cx="12" cy="12" r="5.500" fill="#fff" /><circle cx="12" cy="12" r="4.400" fill="#3b82f0" />
      </svg>
    ),
  },
  {
    name: 'yandex',
    icon: (
      <svg viewBox="0 0 24 24" className={big}>
        <circle cx="12" cy="12" r="12" fill="#fff" />
        <path d="M12 21v-6.500" stroke="#f23a2c" strokeWidth="3.400" />
        <path d="M5.500 5.500 12 14.500" stroke="#f2442c" strokeWidth="3.400" />
        <path d="M18.500 5.500 12 14.500" stroke="#ee2d6e" strokeWidth="3.400" />
      </svg>
    ),
  },
  {
    name: 'settings', line: 'full',
    icon: (
      <svg viewBox="0 0 20 20" className="h-[19px] w-[19px]" fill="none" stroke="#fff">
        <circle cx="10" cy="10" r="5.800" strokeWidth="2.200" />
        <g strokeWidth="2.800"><path d="M10 .8v3.400M10 15.800v3.400M.8 10h3.400M15.800 10h3.400M3.500 3.500l2.400 2.400M14.100 14.100l2.400 2.400M16.500 3.500l-2.400 2.400M5.900 14.100l-2.400 2.400" /></g>
      </svg>
    ),
  },
  {
    name: 'fork', line: 'full',
    icon: (
      <span className="relative flex h-[24px] w-[24px] items-center justify-center">
        <svg viewBox="0 0 24 24" className={big}><path d="m12 .3 11.700 11.700L12 23.700.3 12z" fill="#2fae46" /></svg>
        <span className="absolute font-['Liberation_Sans'] text-[7px] font-bold text-white">F</span>
      </span>
    ),
  },
  {
    name: '1c', line: 'active',
    icon: (
      <span className="relative">
        <CoinIcon className="h-[24px] w-[24px]" />
        <span className="absolute top-[11px] left-[10px] flex h-[15px] w-[15px] items-center justify-center rounded-full bg-[#e8222d] font-['Open_Sans'] text-[11px] font-bold text-white">1</span>
      </span>
    ),
  },
  { name: 'player', line: 'full', icon: <MonitorHand className="h-[18px] w-[24px]" /> },
]

function SystemTaskbar() {
  return (
    <div className="flex h-[40px] shrink-0 bg-linear-to-r from-[#243c44] via-[#20343f] to-[#1b2745] font-['Open_Sans'] text-[12px] text-white">
      {apps.map((a) => (
        <div key={a.name} className="flex w-[49px] flex-col items-center">
          <div className={clsx('flex h-[38px] items-center justify-center', a.line === 'active' ? 'w-[48px] border-r-[3px] border-[#56666d] bg-[#4c5e66]' : 'w-[40px]')}>
            {a.icon}
          </div>
          {a.line === 'full' && <span className="h-[2px] w-[40px] bg-[#76b5ec]" />}
          {a.line === 'active' && <span className="h-[2px] w-[48px] bg-[#76b5ec]" />}
          {a.line === 'split' && <span className="h-[2px] w-[40px] border-r-[9px] border-[#5585ad] bg-[#76b5ec]" />}
        </div>
      ))}
      <div className="ml-auto flex items-center">
        <svg viewBox="0 0 12 7" className="h-[7px] w-[12px]" fill="none" stroke="#fff" strokeWidth="1.300"><path d="M.5 6.500 6 1l5.500 5.500" /></svg>
        <svg viewBox="0 0 16 12" className="ml-[10px] h-[12px] w-[16px]" fill="none" stroke="#fff" strokeWidth="1.100">
          <path d="M6 2.500h8.500v8H4.500V8M15.500 5v3" /><path d="M7 4.500h6v4H6z" fill="#fff" /><path d="M1.500 0v2.500M4 0v2.500M.6 2.500h4.300v2L3.500 6h-1.500L.6 4.500zM2.700 6v4.500h2" />
        </svg>
        <svg viewBox="0 0 14 13" className="ml-[11px] h-[13px] w-[14px]" fill="none" stroke="#dfe4ea" strokeWidth="1">
          <path d="M1 12.500Q2 3 13 1" opacity=".7" /><path d="M3.700 12.500Q4.500 5.500 13 4" /><path d="M6.500 12.500Q7 8 13 7" /><path d="M9.300 12.500q.3-2.200 3.700-2.700" />
          <circle cx="12" cy="12" r="1" fill="#fff" stroke="none" />
        </svg>
        <svg viewBox="0 0 17 14" className="ml-[7px] h-[14px] w-[17px]" fill="none" stroke="#fff" strokeWidth="1.100">
          <path d="M.6 5h2.800L7 1.500v11L3.400 9H.6z" /><path d="M9 5q1.200 2 0 4M11 3.300q2.500 3.700 0 7.400" /><path d="M13.500 1.500q4 5.500 0 11" opacity=".45" />
        </svg>
        <span className="ml-[10px] w-[24px] tracking-[-0.07px]">РУС</span>
        <span className="ml-[7px] flex w-[62px] flex-col items-center leading-[18px] tracking-[-0.72px]">
          <span>17:05</span>
          <span>21.02.2025</span>
        </span>
        <span className="relative ml-[14px] h-[18px] w-[37px]">
          <svg viewBox="0 0 16 16" className="h-[16px] w-[16px]">
            <path d="M0 0h16v13h-5l-3.500 3v-3H0z" fill="#fff" />
            <path d="M3 3.500h10M3 6.500h10M3 9.500h6" stroke="#1c2a45" strokeWidth="1" />
          </svg>
          <span className="absolute top-[7px] left-[6px] flex h-[16px] w-[19px] items-center justify-center rounded-full border border-[#8b929c] bg-[#2a2f39] text-[11px] leading-none font-bold">32</span>
        </span>
        <span className="mr-[4px] h-[40px] w-px bg-[#6b768a]" />
      </div>
    </div>
  )
}

export default function App() {
  return (
    <div className="relative flex h-[1080px] w-[1920px] flex-col overflow-hidden bg-[#212529]">
      <div className="flex h-[1032px] shrink-0">
        <div className="flex w-[7px] shrink-0 flex-col bg-[#23272b]">
          <div className="h-[40px] bg-[#d3dbe6]" />
          <div className="h-[81px] bg-[#f3f3f4]" />
        </div>
        <PlayerWindow />
        <div className="flex flex-1 flex-col bg-[#23272b]">
          <div className="h-[40px] bg-[#c3cad5]" />
          <div className="h-[81px] bg-[#e9eaeb]" />
          <div className="mr-[2px] flex-1 bg-[#24313a]" />
        </div>
      </div>
      <BackgroundStrip />
      <SystemTaskbar />
      <CreateDialog />
      <svg viewBox="0 0 11 17" className="absolute top-[802px] left-[407px] h-[17px] w-[11px]">
        <path d="M.7.800v13l3-2.700 2 4.800 2-.9-2-4.600h4z" fill="#fff" stroke="#222" strokeWidth="1" />
      </svg>
    </div>
  )
}
